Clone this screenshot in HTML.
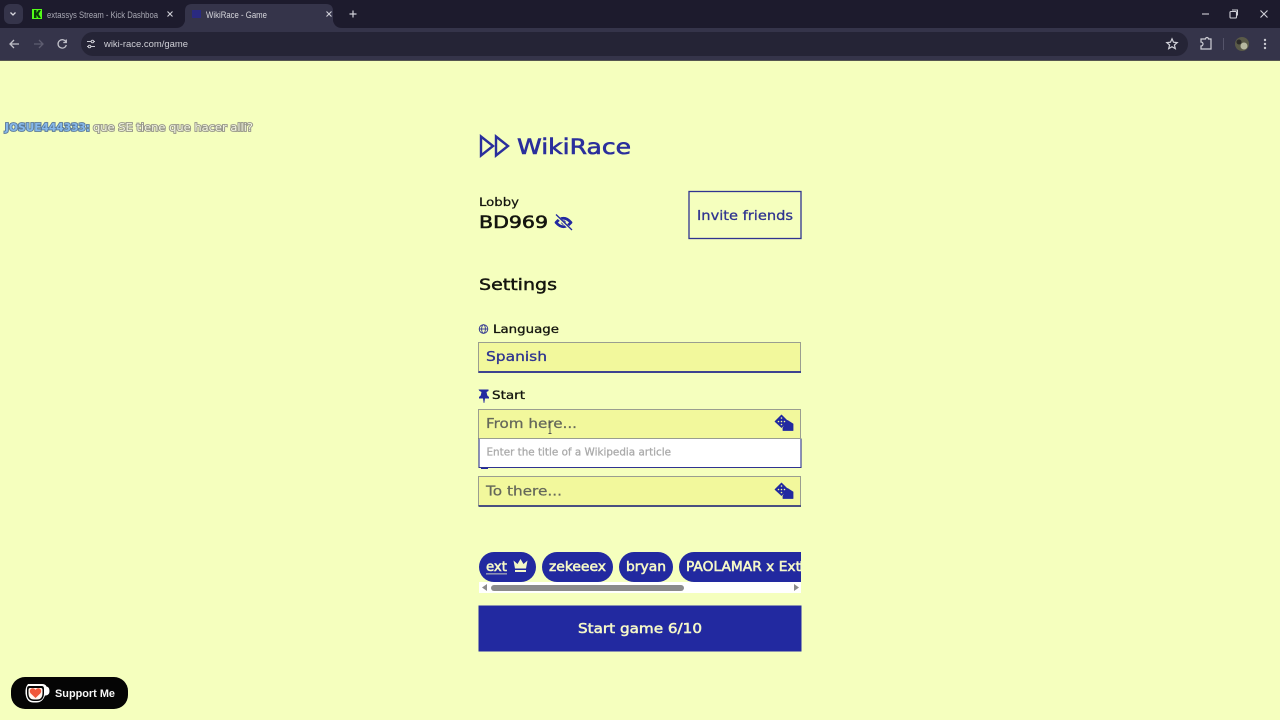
<!DOCTYPE html>
<html><head><meta charset="utf-8"><title>WikiRace - Game</title>
<style>
html,body{margin:0;padding:0;width:1280px;height:720px;overflow:hidden;background:#f5ffbe}
svg{display:block}
text{font-family:"DejaVu Sans","Liberation Sans",sans-serif}
.c{font-family:"Liberation Sans",sans-serif}
</style></head><body>
<svg width="1280" height="720" viewBox="0 0 1280 720" xmlns="http://www.w3.org/2000/svg">
<!-- chrome -->
<rect width="1280" height="28" fill="#1d1b2d"/>
<rect y="28" width="1280" height="32" fill="#35344a"/>
<rect y="60" width="1280" height="1" fill="#55564f"/>
<rect x="4" y="4" width="19" height="20" rx="6" fill="#35344a"/>
<path d="M10.500 12.500l2.500 2.500 2.500-2.500" fill="none" stroke="#d8d8de" stroke-width="1.300"/>
<path d="M176 28q7 0 9-7v-10q0-7 7-7h134q7 0 7 7v10q2 7 9 7z" fill="#35344a"/>
<rect x="32" y="9" width="10" height="10" fill="#53fc18"/>
<path d="M34 10h2.500v3l2-3h2.500l-2.500 4 2.500 4h-2.500l-2-3v3h-2.500z" fill="#0a3a08"/>
<text class="c" x="47" y="18" font-size="9" fill="#a9a9b4" textLength="111" lengthAdjust="spacingAndGlyphs">extassys Stream - Kick Dashboa</text>
<path d="M167.500 11.500l5 5m0-5l-5 5M326.500 11.500l5 5m0-5l-5 5" stroke="#d0d0d8" stroke-width="1.100"/>
<rect x="192" y="10" width="9" height="8" fill="#2a2a80"/>
<text class="c" x="206" y="18" font-size="9" fill="#d6d6dc" textLength="61" lengthAdjust="spacingAndGlyphs">WikiRace - Game</text>
<path d="M353 10.500v7M349.500 14h7" stroke="#d0d0d8" stroke-width="1.200"/>
<rect x="81" y="32" width="1107" height="24" rx="12" fill="#252436"/>
<path d="M19 44h-8.500M14 40l-4 4 4 4" fill="none" stroke="#bfbfc8" stroke-width="1.300"/>
<path d="M34 44h8.500M39 40l4 4-4 4" fill="none" stroke="#5e5d70" stroke-width="1.300"/>
<path d="M66 42a4.200 4.200 0 1 0 0.300 3M66.300 39.500v3h-3" fill="none" stroke="#bfbfc8" stroke-width="1.300"/>
<path d="M87 41.500h4M94 41.500h1M87 46.500h1M91 46.500h4" stroke="#c8c8d0" stroke-width="1.100"/>
<circle cx="92.500" cy="41.500" r="1.300" fill="none" stroke="#c8c8d0"/><circle cx="89.500" cy="46.500" r="1.300" fill="none" stroke="#c8c8d0"/>
<text class="c" x="104" y="47" font-size="9.500" fill="#cfcfd6" textLength="84" lengthAdjust="spacingAndGlyphs">wiki-race.com/game</text>
<path d="M1172 38.800l1.500 3.400 3.700.4-2.800 2.400.9 3.600-3.300-1.900-3.300 1.900.9-3.600-2.800-2.400 3.700-.4z" fill="none" stroke="#d0d0d8" stroke-width="1.200"/>
<path d="M1202 14h7" stroke="#d0d0d8" stroke-width="1.100"/>
<rect x="1230" y="11.500" width="6.500" height="6.500" rx="1" fill="none" stroke="#d0d0d8" stroke-width="1.100"/><path d="M1232 10h5.500v5.500" fill="none" stroke="#d0d0d8"/>
<path d="M1260.500 10.500l7 7m0-7l-7 7" stroke="#d0d0d8" stroke-width="1.100"/>
<path d="M1201 39h4.500a1 1 0 0 1 3 0H1211v10h-10v-3a1.500 1.500 0 0 0 0-4z" fill="none" stroke="#cfcfd6" stroke-width="1.200"/>
<rect x="1223" y="38" width="1" height="12" fill="#55546a"/>
<circle cx="1242" cy="44" r="7" fill="#5a5a48"/><circle cx="1244" cy="46" r="3.500" fill="#b7b8a0"/><circle cx="1239" cy="42" r="2.500" fill="#2b2a28"/>
<circle cx="1265" cy="40" r="1.200" fill="#c8c8d0"/><circle cx="1265" cy="44" r="1.200" fill="#c8c8d0"/><circle cx="1265" cy="48" r="1.200" fill="#c8c8d0"/>

<!-- chat overlay -->
<g font-size="10.500" stroke-width="1.800" paint-order="stroke">
<text x="5" y="131" font-weight="700" fill="#86b8ea" stroke="#5a7a9a" textLength="85" lengthAdjust="spacingAndGlyphs">JOSUE444333:</text>
<text x="93" y="131" fill="#f4f6e0" stroke="#96968a" textLength="160" lengthAdjust="spacingAndGlyphs">que SE tiene que hacer alli?</text>
</g>

<!-- logo -->
<g fill="none" stroke="#2a2f9c" stroke-width="2.400" stroke-linejoin="miter">
<path d="M481 136.500v19l12-9.500z"/><path d="M496 136.500v19l12-9.500z"/>
</g>
<text x="517" y="154" font-size="21" fill="#2a2f9c" stroke="#2a2f9c" stroke-width=".6" textLength="114" lengthAdjust="spacingAndGlyphs">WikiRace</text>

<text x="479" y="206" font-size="11.500" fill="#14150f" stroke="#14150f" stroke-width=".25" textLength="40" lengthAdjust="spacingAndGlyphs">Lobby</text>
<text x="479" y="228" font-size="17" fill="#14150f" stroke="#14150f" stroke-width=".6" textLength="69" lengthAdjust="spacingAndGlyphs">BD969</text>
<!-- eye off -->
<path d="M556 222.500q7.500-8.500 15 0q-7.500 8.500-15 0z" fill="#f5ffbe" stroke="#2229a0" stroke-width="2.800" stroke-linejoin="round"/>
<circle cx="563.500" cy="222.500" r="2.300" fill="#2229a0"/>
<path d="M556 215.500l16 15" stroke="#f5ffbe" stroke-width="2.600"/>
<path d="M556 214.500l16 15.500" stroke="#2229a0" stroke-width="1.300"/>

<rect x="689" y="191.500" width="112" height="47" fill="none" stroke="#2f3490" stroke-width="1.300"/>
<text x="697" y="220" font-size="13" fill="#2f3490" stroke="#2f3490" stroke-width=".3" textLength="96" lengthAdjust="spacingAndGlyphs">Invite friends</text>

<text x="479" y="290" font-size="16" fill="#14150f" stroke="#14150f" stroke-width=".45" textLength="78" lengthAdjust="spacingAndGlyphs">Settings</text>

<!-- language -->
<g fill="none" stroke="#2f3490" stroke-width="0.900"><circle cx="483.500" cy="329" r="4.300"/><ellipse cx="483.500" cy="329" rx="1.900" ry="4.300"/><path d="M479.200 329h8.600"/></g>
<text x="493" y="333" font-size="11.500" fill="#14150f" stroke="#14150f" stroke-width=".3" textLength="66" lengthAdjust="spacingAndGlyphs">Language</text>
<rect x="478.500" y="342.500" width="322" height="30" fill="#f2f89c" stroke="#9a9e90"/>
<rect x="478.500" y="371" width="322.500" height="2" fill="#3d4390"/>
<text x="486" y="361" font-size="13" fill="#2f3490" stroke="#2f3490" stroke-width=".3" textLength="61" lengthAdjust="spacingAndGlyphs">Spanish</text>

<!-- start -->
<path d="M478.500 389.500h10v1.500l-2 1 .8 3.500 1.700 1.500v1.500h-4l-.7 4.500h-.6l-.7-4.500h-4v-1.500l1.700-1.500.8-3.500-2-1z" fill="#2229a0"/>
<text x="492" y="399" font-size="11.500" fill="#14150f" stroke="#14150f" stroke-width=".3" textLength="33" lengthAdjust="spacingAndGlyphs">Start</text>
<rect x="478.500" y="409.500" width="322" height="29" fill="#f2f89c" stroke="#9a9e90"/>
<text x="486" y="428" font-size="13" fill="#65685a" stroke="#65685a" stroke-width=".25" textLength="91" lengthAdjust="spacingAndGlyphs">From here...</text>
<path d="M550 423v10M548.500 422.500h3M548.500 433.500h3" stroke="#55564f" stroke-width="0.900"/>

<rect x="481" y="465" width="7" height="4" fill="#2229a0"/>
<rect x="479" y="438.500" width="322" height="29" fill="#ffffff"/>
<path d="M479 438.500v29h322v-29" fill="none" stroke="#2f3490" stroke-width="1.100"/>
<path d="M479 438.500h322" stroke="#9a9e90"/>
<text x="486.500" y="455.500" font-size="11" fill="#aaaaaa" stroke="#aaaaaa" stroke-width=".3" textLength="184.500" lengthAdjust="spacingAndGlyphs">Enter the title of a Wikipedia article</text>

<rect x="478.500" y="476.500" width="322" height="29" fill="#f2f89c" stroke="#9a9e90"/>
<rect x="478.500" y="505" width="322.500" height="2" fill="#4a5080"/>
<text x="486" y="495.500" font-size="13" fill="#65685a" stroke="#65685a" stroke-width=".25" textLength="76" lengthAdjust="spacingAndGlyphs">To there...</text>

<!-- dice -->
<g stroke="#2229a0" stroke-width=".8" stroke-linejoin="round"><path d="M781.500 415l6.500 6.500-6.500 6-6.500-6z" fill="#2229a0"/><path d="M787.500 420.500l5.500 3.500v6.500h-10v-2.500z" fill="#2229a0"/></g>
<g fill="#f2f89c"><circle cx="781.500" cy="418" r=".8"/><circle cx="781.500" cy="421.500" r=".8"/><circle cx="778.500" cy="421.500" r=".8"/><circle cx="784.500" cy="421.500" r=".8"/><circle cx="781.500" cy="424.500" r=".8"/></g>
<g transform="translate(0 68)"><g stroke="#2229a0" stroke-width=".8" stroke-linejoin="round"><path d="M781.500 415l6.500 6.500-6.500 6-6.500-6z" fill="#2229a0"/><path d="M787.500 420.500l5.500 3.500v6.500h-10v-2.500z" fill="#2229a0"/></g>
<g fill="#f2f89c"><circle cx="781.500" cy="418" r=".8"/><circle cx="781.500" cy="421.500" r=".8"/><circle cx="778.500" cy="421.500" r=".8"/><circle cx="784.500" cy="421.500" r=".8"/><circle cx="781.500" cy="424.500" r=".8"/></g></g>

<!-- chips -->
<rect x="479" y="582" width="322" height="11" fill="#ffffff"/>
<g fill="#2229a0">
<rect x="479" y="552" width="57" height="30" rx="15"/>
<rect x="542" y="552" width="71" height="30" rx="15"/>
<rect x="619" y="552" width="54" height="30" rx="15"/>
<path d="M801 552h-107a15 15 0 0 0 0 30h107z"/>
</g>
<g fill="#f5f8c8" stroke="#f5f8c8" stroke-width=".55" font-size="13">
<text x="486" y="571" textLength="21" lengthAdjust="spacingAndGlyphs">ext</text>
<rect x="486" y="573.500" width="21" height=".8" stroke="none"/>
<path stroke="none" d="M513.500 560.500l4 3.500 3-5 3 5 4-3.500-1.500 8h-11zM515 570h11v2h-11z"/>
<text x="549" y="571" textLength="57" lengthAdjust="spacingAndGlyphs">zekeeex</text>
<text x="626" y="571" textLength="40" lengthAdjust="spacingAndGlyphs">bryan</text>
</g>
<svg x="679" y="552" width="122" height="30" viewBox="679 552 122 30"><text x="686" y="571" fill="#f5f8c8" stroke="#f5f8c8" stroke-width=".55" font-size="13" textLength="115" lengthAdjust="spacingAndGlyphs">PAOLAMAR x Ext</text><rect x="800" y="561" width="2" height="10" fill="#f5f8c8" opacity=".6"/></svg>
<rect x="491" y="585" width="193" height="6" rx="3" fill="#8b8b8b"/>
<path d="M487 584v7l-5-3.500zM794 584v7l5-3.500z" fill="#8b8b8b"/>

<!-- start -->
<rect x="478.500" y="605.500" width="323" height="46" fill="#2229a0"/>
<text x="578" y="633" font-size="13" fill="#f5f8c8" stroke="#f5f8c8" stroke-width=".5" textLength="124" lengthAdjust="spacingAndGlyphs">Start game 6/10</text>

<!-- support -->
<rect x="11" y="677" width="117" height="32" rx="14" fill="#050505"/>
<path d="M28 684h14q3.500 0 4.500 2.500 3 .5 3 4.500t-3.500 4.500h-1q-2.500 7-8.500 7h-3q-7 0-8-9-.5-6 2.500-9.500z" fill="#ffffff"/>
<path d="M29 686h13q2 0 2 3v4q0 8-7 8h-3q-7 0-7-8v-4q0-3 2-3z" fill="#050505"/>
<path d="M30 688h11q1.500 0 1.500 2v3q0 6.500-5.500 6.500h-3q-5.500 0-5.500-6.500v-3q0-2 1.500-2z" fill="#fff6f0"/>
<path d="M35.500 698l-5-4.700q-1.800-3 .6-4.500t4.400 1q2-2.500 4.400-1t.6 4.500z" fill="#f0573a"/>
<text class="c" x="55" y="697" font-size="11" font-weight="700" fill="#f6f6f6" textLength="60" lengthAdjust="spacingAndGlyphs">Support Me</text>
</svg>
</body></html>
